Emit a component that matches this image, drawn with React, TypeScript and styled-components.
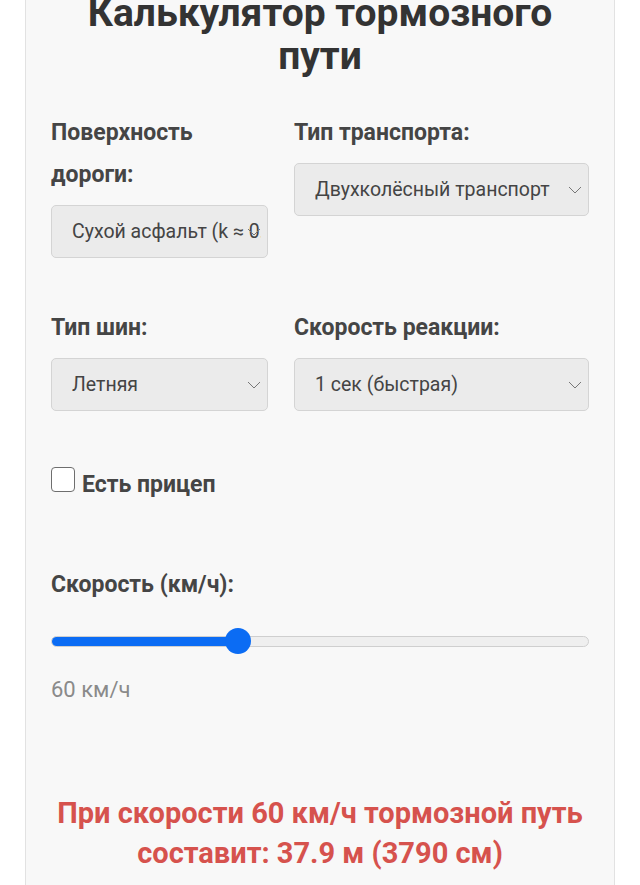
import React, { useState } from 'react';
import styled, { createGlobalStyle } from 'styled-components';

const GlobalStyle = createGlobalStyle`
  * {
    box-sizing: border-box;
  }
  body {
    margin: 0;
    background: #fff;
    font-family: Roboto, "Noto Sans", "Liberation Sans", sans-serif;
    overflow: hidden;
  }
`;

const Page = styled.div`
  position: relative;
  min-height: 100vh;
  background: #fff;
`;

const TopShade = styled.div`
  position: absolute;
  top: 0;
  left: 0;
  right: 0;
  height: 4px;
  background: linear-gradient(180deg, rgba(0, 0, 0, 0.06), rgba(0, 0, 0, 0));
  z-index: 2;
`;

const Card = styled.div`
  width: 590px;
  min-height: 100vh;
  margin: 0 auto;
  padding: 0 25px 40px;
  background: #f8f8f8;
  border-left: 1px solid #e2e2e2;
  border-right: 1px solid #e2e2e2;
`;

const Title = styled.h1`
  margin: -8px 0 34px;
  font-size: 39px;
  line-height: 43px;
  font-weight: 700;
  color: #333;
  text-align: center;
`;

const Grid = styled.div`
  display: grid;
  grid-template-columns: 217px 1fr;
  column-gap: 26px;
  row-gap: 49px;
  align-items: start;
`;

const Field = styled.div`
  display: flex;
  flex-direction: column;
`;

const Label = styled.label`
  display: block;
  margin-bottom: 9px;
  font-size: 23px;
  line-height: 42px;
  font-weight: 700;
  color: #454545;
`;

const SelectBox = styled.div`
  position: relative;
  display: flex;
  align-items: center;
  height: 53px;
  padding: 0 6px 0 20px;
  background: #ebebeb;
  border: 1px solid #d4d4d4;
  border-radius: 5px;
  overflow: hidden;
`;

const SelectValue = styled.span`
  flex: 1;
  white-space: nowrap;
  overflow: hidden;
  font-size: 19.5px;
  color: #444;
`;

const Chevron = styled.svg`
  position: absolute;
  right: 6px;
  top: 50%;
  margin-top: -4px;
  width: 14px;
  height: 8px;
`;

const CheckRow = styled.label`
  display: flex;
  align-items: flex-start;
  gap: 7px;
  margin-top: 53px;
  font-size: 23px;
  line-height: 42px;
  font-weight: 700;
  color: #454545;
`;

const CheckBox = styled.span<{ checked: boolean }>`
  width: 24px;
  height: 25px;
  margin-top: 3px;
  border: 1.5px solid #6e6e6e;
  border-radius: 4px;
  background: ${(p) => (p.checked ? '#0b6cf4' : '#fff')};
`;

const SpeedLabel = styled(Label)`
  margin: 58px 0 0;
`;

const Slider = styled.div`
  position: relative;
  display: flex;
  align-items: center;
  height: 26px;
  margin-top: 22px;
`;

const Track = styled.div`
  position: relative;
  flex: 1;
  height: 11px;
  background: #efefef;
  border: 1px solid #cfcfcf;
  border-radius: 6px;
  overflow: hidden;
`;

const Fill = styled.div`
  height: 100%;
  background: #0b6cf4;
`;

const Thumb = styled.div`
  position: absolute;
  top: 0;
  width: 26px;
  height: 26px;
  margin-left: -13px;
  border-radius: 50%;
  background: #0b6cf4;
`;

const SpeedValue = styled.div`
  margin-top: 15px;
  font-size: 22px;
  line-height: 42px;
  color: #8a8a8a;
`;

const Result = styled.p`
  margin: 82px 0 0;
  font-size: 29px;
  line-height: 40px;
  font-weight: 700;
  color: #d6524d;
  text-align: center;
`;

type SelectProps = { value: string };

function Select({ value }: SelectProps) {
  return (
    <SelectBox>
      <SelectValue>{value}</SelectValue>
      <Chevron viewBox="0 0 14 8">
        <polyline points="1,1 7,7 13,1" fill="none" stroke="#777" strokeWidth="1" />
      </Chevron>
    </SelectBox>
  );
}

export default function App() {
  const [trailer] = useState(false);
  const speed = 60;
  const min = 1;
  const max = 175;
  const pct = (speed - min) / (max - min);
  const thumbPos = `calc(13px + ${pct} * (100% - 26px))`;
  const distance = 37.9;

  return (
    <Page>
      <GlobalStyle />
      <TopShade />
      <Card>
        <Title>Калькулятор тормозного пути</Title>
        <Grid>
          <Field>
            <Label>Поверхность дороги:</Label>
            <Select value="Сухой асфальт (k ≈ 0.7)" />
          </Field>
          <Field>
            <Label>Тип транспорта:</Label>
            <Select value="Двухколёсный транспорт" />
          </Field>
          <Field>
            <Label>Тип шин:</Label>
            <Select value="Летняя" />
          </Field>
          <Field>
            <Label>Скорость реакции:</Label>
            <Select value="1 сек (быстрая)" />
          </Field>
        </Grid>
        <CheckRow>
          <CheckBox checked={trailer} />
          Есть прицеп
        </CheckRow>
        <SpeedLabel>Скорость (км/ч):</SpeedLabel>
        <Slider>
          <Track>
            <Fill style={{ width: thumbPos }} />
          </Track>
          <Thumb style={{ left: thumbPos }} />
        </Slider>
        <SpeedValue>{speed} км/ч</SpeedValue>
        <Result>
          При скорости {speed} км/ч тормозной путь составит: {distance} м ({Math.round(distance * 100)} см)
        </Result>
      </Card>
    </Page>
  );
}
